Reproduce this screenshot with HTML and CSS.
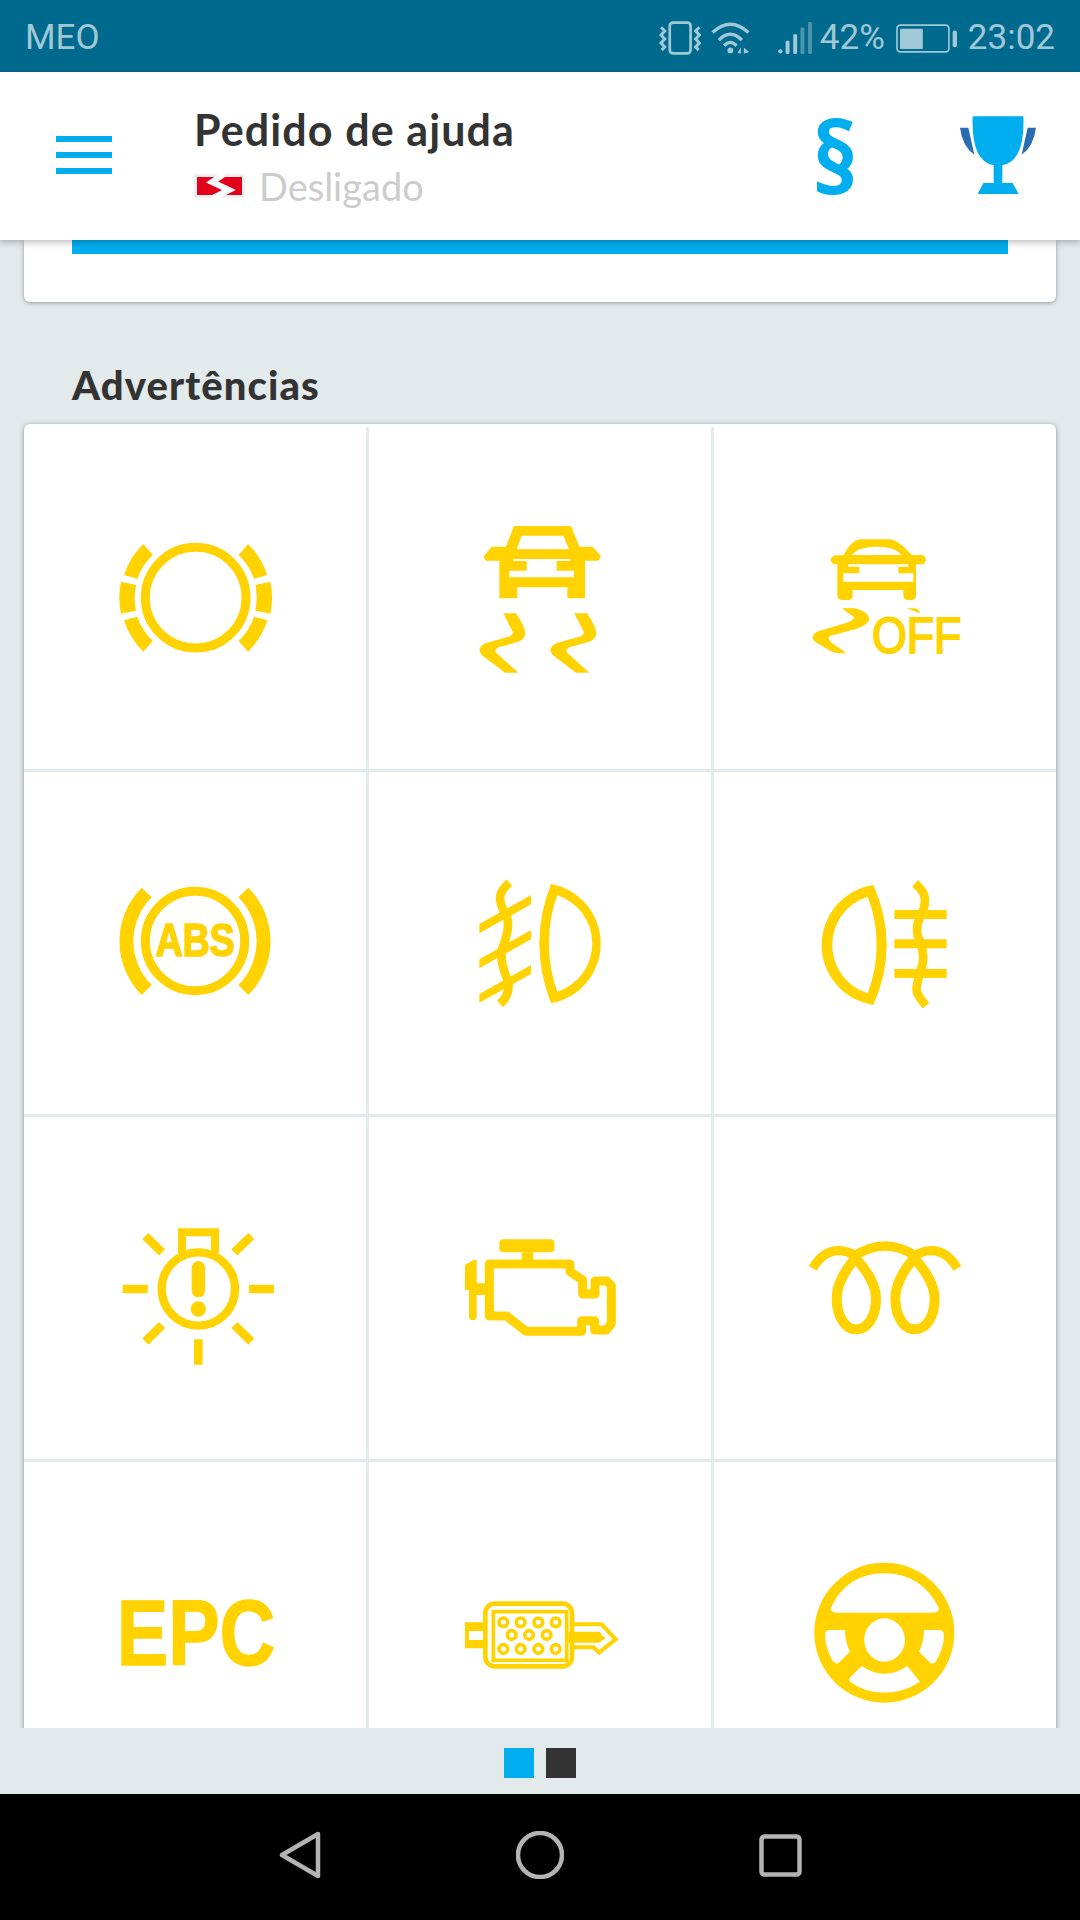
FILE: index.html
```html
<!DOCTYPE html>
<html lang="pt">
<head>
<meta charset="utf-8">
<title>Pedido de ajuda</title>
<link rel="stylesheet" href="styles.css">
</head>
<body>
<div class="status">
  <span class="status-text carrier">MEO</span>
  <div class="status-right">
    <svg class="st-vib" viewBox="60 58 125 100"><rect class="st-line" x="92" y="62" width="62" height="92" rx="10" stroke-width="8"/><path class="st-line" stroke-width="9" d="M66 76l11 11-11 12 11 12-11 12 11 12-9 9M180 76l-11 11 11 12-11 12 11 12-11 12 9 9"/></svg>
    <svg class="st-wifi" viewBox="215 58 120 100"><path class="st-line" stroke-width="10" d="M219 90Q273 40 328 90M238 113Q273 78 308 113M254 130Q273 110 292 130"/><circle class="st-fill" cx="273" cy="144" r="9"/><path class="st-fill" d="M305 154l-10-3 10-16zM314 135l16 14-16 5z"/></svg>
    <svg class="st-sig" viewBox="415 58 110 100"><circle class="st-fill" cx="424" cy="147" r="6.500"/><rect class="st-fill" x="440" y="115" width="12" height="40" rx="4"/><rect class="st-fill" x="463" y="95" width="12" height="60" rx="4"/><rect class="st-dim" x="485" y="75" width="12" height="80" rx="4"/><rect class="st-dim" x="508" y="58" width="12" height="97" rx="4"/></svg>
    <span class="status-text pct">42%</span>
    <svg class="st-bat" viewBox="768 66 182 86"><rect class="st-line" x="771" y="69" width="155" height="80" rx="10" stroke-width="5"/><rect class="st-fill" x="780" y="80" width="68" height="60" rx="3"/><rect class="st-fill" x="937" y="85" width="13" height="50" rx="6"/></svg>
    <span class="status-text time">23:02</span>
  </div>
</div>

<header class="header">
  <div class="burger"><span></span><span></span><span></span></div>
  <div class="titles">
    <div class="title">Pedido de ajuda</div>
    <div class="sub">
      <svg class="flag" viewBox="0 0 51 24"><rect class="flag-bg" width="51" height="24"/><rect class="flag-red" x="3" y="3" width="45" height="18"/><path class="flag-white" d="M30 0L18 8L35 16L19 24"/></svg>
      <span>Desligado</span>
    </div>
  </div>
  <span class="para">§</span>
  <svg class="trophy" viewBox="960 350 228 235">
    <path class="tr-dark" d="M960 384h25l18 81q-36-25-43-81zM1188 384h-25l-18 81q36-25 43-81z"/>
    <path class="tr-blue" d="M998 350h152q5 135-63 147v53h31l18 33h-123l17-33h31v-53q-68-12-63-147z"/>
  </svg>
</header>

<main class="main">
  <section class="top-card"><div class="top-bar"></div></section>
  <h2 class="heading">Advertências</h2>
  <section class="grid">
    <div class="cell"><svg viewBox="12 21 1026 1026">
      <circle class="s" cx="527" cy="533" r="151" stroke-width="27"/>
      <g><path class="f" d="M370 372L398 405A185 185 0 0 0 352 476L312 465A228 228 0 0 1 370 372Z"/><path class="f" d="M303 485L348 495A185 185 0 0 0 348 572L303 581A228 228 0 0 1 303 485Z"/><path class="f" d="M312 601L352 590A185 185 0 0 0 398 663L370 695A228 228 0 0 1 312 601Z"/></g>
      <g transform="translate(1054 0) scale(-1 1)"><path class="f" d="M370 372L398 405A185 185 0 0 0 352 476L312 465A228 228 0 0 1 370 372Z"/><path class="f" d="M303 485L348 495A185 185 0 0 0 348 572L303 581A228 228 0 0 1 303 485Z"/><path class="f" d="M312 601L352 590A185 185 0 0 0 398 663L370 695A228 228 0 0 1 312 601Z"/></g>
    </svg></div>
    <div class="cell"><svg viewBox="-3 -219 1026 1026">
      <path class="f" fill-rule="evenodd" d="M432 78H603L628 140H668L693 168L685 182H645V295H592V262H442V295H388V182H348L340 170L365 140H408ZM455 107L440 148H597L580 107ZM430 177V183H470V212H418V232H612V212H560V183H600V177Z"/>
      <path class="f" d="M400 340H438Q465 380 466 400Q466 418 440 427L385 442Q370 450 380 460L445 518H405L335 465Q318 445 345 430L410 412Q432 405 428 395Z"/>
      <path class="f" d="M613 340H651Q678 380 679 400Q679 418 653 427L598 442Q583 450 593 460L658 518H618L548 465Q531 445 558 430L623 412Q645 405 641 395Z"/>
    </svg></div>
    <div class="cell"><svg viewBox="-198 -249 1026 1026">
      <path class="f" fill-rule="evenodd" d="M240 88H330Q355 90 395 135H428Q438 140 438 152L430 163H408V255Q408 270 395 270H385Q370 270 370 255V240H218V255Q218 270 205 270H188Q172 270 172 255V163H160L152 152Q152 140 165 136H190Q215 90 240 88ZM215 135H365Q345 110 290 110Q235 110 215 135ZM205 163V170H238V190H190V215H400V190H355V170H385V163Z"/>
      <path class="f" d="M185 295H225Q265 305 268 328Q265 345 225 358L150 378Q140 385 155 398L200 430Q165 430 155 425L105 395Q88 380 110 365L195 340Q225 330 222 322Z"/>
      <path class="f" d="M380 295H405Q418 298 420 310Q400 303 380 295Z"/>
      <text class="off" x="276" y="430" textLength="268" lengthAdjust="spacingAndGlyphs">OFF</text>
    </svg></div>

    <div class="cell"><svg viewBox="-228 -264 1026 1026">
      <circle class="s" cx="285" cy="243" r="149" stroke-width="27"/>
      <path class="f" d="M125 83L155 112A185 185 0 0 0 155 375L125 405A228 228 0 0 1 125 83Z"/>
      <path class="f" d="M445 83L415 112A185 185 0 0 1 415 375L445 405A228 228 0 0 0 445 83Z"/>
      <text class="abs" x="167" y="289" textLength="237" lengthAdjust="spacingAndGlyphs">ABS</text>
    </svg></div>
    <div class="cell"><svg viewBox="-243 -264 1026 1026">
      <path class="f" fill-rule="evenodd" d="M303 72A182 182 0 0 1 303 430Q268 340 268 250Q268 160 303 72ZM322 106Q297 170 297 250Q297 330 322 395A152 152 0 0 0 322 106Z"/>
      <path class="f" d="M88 192L243 105V133L88 220ZM88 298L243 210V238L88 325ZM88 402L243 315V342L88 428Z"/>
      <path class="s" stroke-width="26" d="M178 68Q150 92 150 115Q152 140 172 175Q180 210 155 270Q150 310 175 365Q180 405 150 432"/>
    </svg></div>
    <div class="cell"><svg viewBox="792 -264 1026 1026">
      <path class="f" fill-rule="evenodd" d="M1270 75A182 182 0 0 0 1270 435Q1310 345 1310 255Q1310 165 1270 75ZM1253 110A152 152 0 0 0 1253 400Q1280 330 1280 255Q1280 180 1253 110Z"/>
      <path class="f" d="M1333 150H1490V177H1333ZM1333 238H1490V265H1333ZM1333 327H1490V354H1333Z"/>
      <path class="s" stroke-width="26" d="M1395 70Q1425 95 1425 120Q1425 145 1410 170Q1392 210 1410 245Q1428 290 1412 335Q1398 375 1400 395Q1405 410 1428 437"/>
    </svg></div>

    <div class="cell"><svg viewBox="-228 -279 1026 1026">
      <circle class="s" cx="295" cy="237" r="110" stroke-width="25"/>
      <path class="s" stroke-width="24" d="M246 130V67H345V130"/>
      <path class="round" stroke-width="40" d="M295 173V242"/>
      <circle class="f" cx="295" cy="297" r="23"/>
      <path class="s" stroke-width="26" d="M68 237H143M447 237H522M295 388V464M136 78L186 127M454 78L403 127M186 345L136 395M403 345L454 395"/>
    </svg></div>
    <div class="cell"><svg viewBox="-243 -309 1026 1026">
      <rect class="f" x="148" y="58" width="165" height="39" rx="12"/>
      <rect class="f" x="215" y="97" width="35" height="25"/>
      <path class="j" stroke-width="27" d="M118 200V132H360V155L398 180V222H435V183H470L484 197V310L470 330H434V302H395V334H228L170 288H118V200"/>
      <path class="f" d="M45 135L70 120H80V190H108V225H80V290Q80 300 68 300Q57 300 57 290V210H45Z"/>
    </svg></div>
    <div class="cell"><svg viewBox="-228 -339 1026 1026">
      <path class="s" stroke-width="28" d="M68 115Q100 62 145 62Q175 62 200 80M502 115Q470 62 425 62Q395 62 372 80M190 80Q285 16 380 80"/>
      <path class="s" stroke-width="30" d="M196 85C160 125 140 170 140 205C140 265 170 298 197 298C230 298 258 265 258 205C258 170 235 125 196 85ZM372 85C336 125 316 170 316 205C316 265 346 298 373 298C406 298 434 265 434 205C434 170 411 125 372 85Z"/>
    </svg></div>

    <div class="cell"><svg viewBox="0 0 1026 1026">
      <text class="epc" x="278" y="609" textLength="476" lengthAdjust="spacingAndGlyphs">EPC</text>
    </svg></div>
    <div class="cell"><svg viewBox="-243 -384 1026 1026">
      <rect class="s" x="106" y="41" width="260" height="188" rx="28" stroke-width="14"/>
      <rect class="s" x="130" y="65" width="220" height="146" stroke-width="11"/>
      <g class="s" stroke-width="11"><circle cx="160" cy="97" r="13"/><circle cx="212" cy="97" r="13"/><circle cx="265" cy="97" r="13"/><circle cx="317" cy="97" r="13"/><circle cx="185" cy="135" r="13"/><circle cx="237" cy="135" r="13"/><circle cx="290" cy="135" r="13"/><circle cx="160" cy="177" r="13"/><circle cx="212" cy="177" r="13"/><circle cx="265" cy="177" r="13"/><circle cx="317" cy="177" r="13"/></g>
      <path class="f" fill-rule="evenodd" d="M45 97H102V175H45ZM57 123V150H102V123Z"/>
      <path class="s" stroke-width="12" d="M372 103H455L497 148L447 188L430 172H372"/>
      <path class="f" d="M355 125H448L466 145L447 158H355Z"/>
    </svg></div>
    <div class="cell"><svg viewBox="-228 -264 1026 1026">
      <path class="f" fill-rule="evenodd" d="M283 38A210 210 0 1 1 282.900 38ZM122 175Q170 70 283 70Q395 70 447 175Q445 188 430 188H138Q122 188 122 175ZM283 205C250 205 223 235 223 270C223 305 250 335 283 335C316 335 345 305 345 270C345 235 316 205 283 205ZM118 240H165Q165 275 180 305L145 340Q135 342 130 335Q105 295 105 255Q107 240 118 240ZM448 240H402Q402 275 387 305L422 340Q432 342 437 335Q462 295 462 255Q460 240 448 240ZM215 348Q283 395 352 348L390 395Q340 428 283 428Q225 428 180 395Q175 385 182 380Z"/>
    </svg></div>
  </section>
</main>

<div class="pager"><span class="dot on"></span><span class="dot"></span></div>

<nav class="nav">
  <svg class="nav-back" viewBox="0 0 42 48"><path class="nav-line" d="M39 3V45L3 24Z"/></svg>
  <svg class="nav-home" viewBox="0 0 48 48"><circle class="nav-line" cx="24" cy="24" r="22"/></svg>
  <svg class="nav-rec" viewBox="0 0 43 43"><rect class="nav-line" x="2.500" y="2.500" width="38" height="38" rx="3"/></svg>
</nav>
</body>
</html>
```

FILE: styles.css
```css
* { box-sizing: border-box; }
html, body { margin: 0; padding: 0; }
body {
  width: 1080px;
  height: 1920px;
  display: flex;
  flex-direction: column;
  overflow: hidden;
  background: #e3eaec;
  font-family: Lato, "Noto Sans", sans-serif;
}

/* status bar */
.status {
  height: 72px;
  flex: none;
  background: #006a8e;
  display: flex;
  align-items: center;
  justify-content: space-between;
  padding: 4px 25px 0 25px;
}
.status-text {
  font-family: Roboto, sans-serif;
  font-size: 35px;
  line-height: 40px;
  color: #a0c8d6;
}
.carrier { font-size: 35px; }
.status-right { display: flex; align-items: center; }
.st-vib { width: 42px; height: 34px; margin-right: 10px; }
.st-wifi { width: 40px; height: 33px; margin-right: 26px; }
.st-sig { width: 37px; height: 33px; margin-right: 6px; }
.st-bat { width: 61px; height: 29px; margin: 0 11px; }
.st-line { fill: none; stroke: #a0c8d6; }
.st-fill { fill: #a0c8d6; }
.st-dim { fill: #4d93ac; }

/* header */
.header {
  height: 168px;
  flex: none;
  background: #fff;
  display: flex;
  align-items: center;
  position: relative;
  z-index: 2;
  padding: 0 44px 0 56px;
  box-shadow: 0 2px 7px rgba(0, 0, 0, .28);
}
.burger {
  width: 56px;
  display: flex;
  flex-direction: column;
  gap: 10px;
  margin-top: -2px;
  margin-right: 82px;
}
.burger span { height: 6px; background: #00aeef; }
.titles { flex: 1; padding-top: 8px; }
.title {
  font-size: 43px;
  line-height: 48px;
  font-weight: 700;
  color: #333;
  letter-spacing: 1.1px;
  margin-top: -6px;
}
.sub {
  display: flex;
  align-items: center;
  font-size: 38px;
  line-height: 44px;
  color: #ccc;
  margin-top: 10px;
}
.flag { width: 51px; height: 24px; margin-right: 14px; }
.flag-bg { fill: #eee; }
.flag-red { fill: #e2001a; }
.flag-white { fill: none; stroke: #fff; stroke-width: 6; }
.para {
  font-family: "Open Sans", sans-serif;
  font-weight: 700;
  font-size: 98px;
  line-height: 84px;
  color: #00aeef;
  margin-right: 101px;
  transform: scaleX(.95);
}
.trophy { width: 76px; height: 79px; margin-top: -2px; }
.tr-dark { fill: #2a6cb0; }
.tr-blue { fill: #00aeef; }

/* content */
.main { flex: 1; min-height: 0; overflow: hidden; }
.top-card {
  margin: 0 24px;
  height: 62px;
  background: #fff;
  border-radius: 0 0 6px 6px;
  box-shadow: 0 1px 4px rgba(0, 0, 0, .35);
}
.top-bar { height: 14px; margin: 0 48px; background: #00aeef; }
.heading {
  margin: 0;
  height: 122px;
  padding: 61px 0 0 72px;
  font-size: 40px;
  line-height: 44px;
  font-weight: 900;
  letter-spacing: 1.1px;
  color: #333;
}
.grid {
  margin: 0 24px;
  padding-top: 3px;
  background: #fff;
  border-radius: 6px 6px 0 0;
  box-shadow: 0 1px 5px rgba(0, 0, 0, .4);
  display: grid;
  grid-template-columns: 345px 345px 342px;
  grid-auto-rows: 345px;
}
.cell { border-right: 3px solid #e3eaec; border-bottom: 3px solid #e3eaec; }
.cell:nth-child(3n) { border-right: 0; }
.cell svg { display: block; width: 342px; height: 342px; }
.f { fill: #ffd200; }
.s { fill: none; stroke: #ffd200; }
.j { fill: none; stroke: #ffd200; stroke-linejoin: round; }
.round { fill: none; stroke: #ffd200; stroke-linecap: round; }
.abs, .off, .epc { font-family: "Liberation Sans", sans-serif; fill: #ffd200; stroke: #ffd200; }
.abs { font-weight: 700; font-size: 140px; stroke-width: 5px; }
.off { font-size: 152px; stroke-width: 6px; }
.epc { font-weight: 700; font-size: 277px; stroke-width: 4px; }

/* pager */
.pager {
  height: 66px;
  flex: none;
  display: flex;
  justify-content: center;
  align-items: center;
  gap: 12px;
  padding-top: 3px;
}
.dot { width: 30px; height: 30px; background: #333; }
.dot.on { background: #00aeef; }

/* nav */
.nav {
  height: 126px;
  flex: none;
  background: #000;
  display: flex;
  align-items: center;
  justify-content: center;
  gap: 195px;
  padding-bottom: 4px;
}
.nav-back { width: 42px; height: 48px; }
.nav-home { width: 48px; height: 48px; }
.nav-rec { width: 43px; height: 43px; }
.nav-line { fill: none; stroke: #b4b4b4; stroke-width: 4.500; stroke-linejoin: round; }
```
